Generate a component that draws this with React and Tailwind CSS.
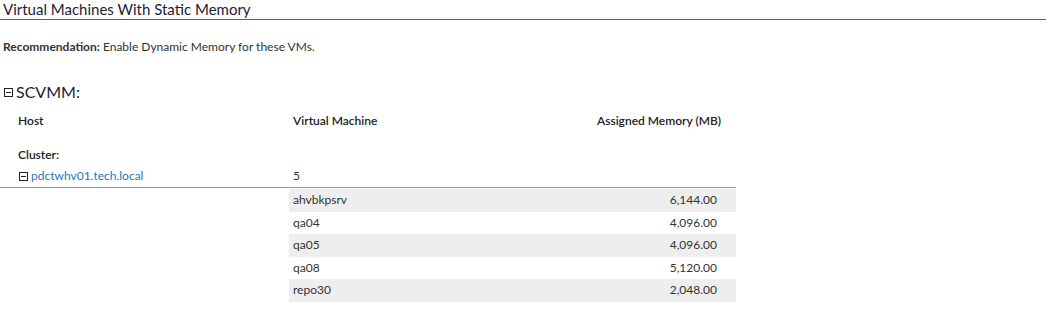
const VMS = [
  { name: 'ahvbkpsrv', mem: '6,144.00' },
  { name: 'qa04', mem: '4,096.00' },
  { name: 'qa05', mem: '4,096.00' },
  { name: 'qa08', mem: '5,120.00' },
  { name: 'repo30', mem: '2,048.00' },
]

function MinusBox() {
  return (
    <span className="inline-flex w-[9px] h-[9px] border border-[#222] items-center justify-center flex-shrink-0">
      <span className="block w-[5px] h-px bg-[#222]" />
    </span>
  )
}

export default function App() {
  return (
    <div className="bg-white w-[1063px] h-[311px] text-[#333] font-['Segoe_UI','Lato','Liberation_Sans',sans-serif]">
      {/* Title */}
      <div className="w-[1046px] border-b border-[#2f6a92] h-[20px] pl-[3px]">
        <h1 className="text-[15px] leading-[18px] text-[#1c2233]">Virtual Machines With Static Memory</h1>
      </div>

      {/* Recommendation */}
      <p className="text-[12px] leading-[16px] pl-[3px] mt-[19px]">
        <span className="font-bold">Recommendation:</span> Enable Dynamic Memory for these VMs.
      </p>

      {/* Group */}
      <div className="flex items-center gap-[3px] pl-[4px] mt-[27px] h-[20px]">
        <MinusBox />
        <span className="text-[16px] text-[#1c2233]">SCVMM:</span>
      </div>

      {/* Table */}
      <div className="w-[736px] text-[12px] mt-[9px]">
        <div className="flex h-[20px] items-center font-semibold text-[#222]">
          <div className="w-[289px] pl-[18px]">Host</div>
          <div className="flex-1 pl-[4px]">Virtual Machine</div>
          <div className="pr-[15px]">Assigned Memory (MB)</div>
        </div>
        <div className="flex h-[20px] items-center font-semibold text-[#222] mt-[14px]">
          <div className="pl-[18px]">Cluster:</div>
        </div>
        <div className="flex h-[23px] items-center border-b border-[#999]">
          <div className="w-[289px] pl-[19px] flex items-center gap-[3px]">
            <MinusBox />
            <span className="text-[#2a76b6]">pdctwhv01.tech.local</span>
          </div>
          <div className="flex-1 pl-[4px]">5</div>
        </div>
        <div className="mt-[1px]">
          {VMS.map((vm, i) => (
            <div key={vm.name} className="flex h-[22.5px]">
              <div className="w-[289px]" />
              <div className={`flex-1 flex items-center justify-between pl-[4px] pr-[19px] ${i % 2 === 0 ? 'bg-[#eeeeee]' : ''}`}>
                <span>{vm.name}</span>
                <span>{vm.mem}</span>
              </div>
            </div>
          ))}
        </div>
      </div>
    </div>
  )
}
